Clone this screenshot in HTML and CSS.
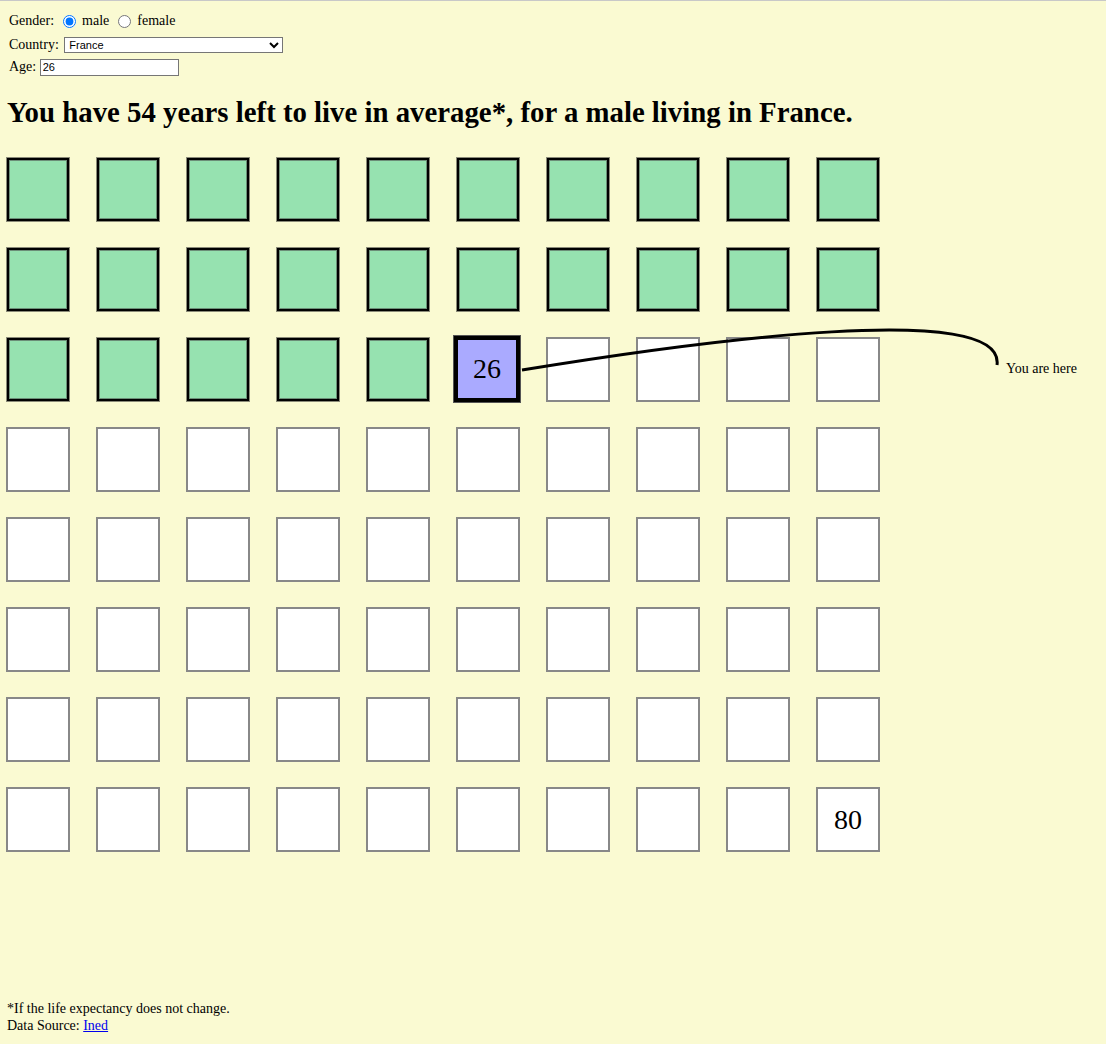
FILE: index.html
```html
<!DOCTYPE html>
<html>
<head>
<meta charset="utf-8">
<title>Life left</title>
<link rel="stylesheet" href="styles.css">
</head>
<body>
<form class="form">
  <div class="row row-gender">Gender: <input type="radio" name="g" class="radio" checked> male <input type="radio" name="g" class="radio"> female</div>
  <div class="row row-country">Country: <select class="select"><option>France</option></select></div>
  <div class="row row-age">Age: <input type="text" class="age" value="26"></div>
</form>
<h1 class="title">You have 54 years left to live in average*, for a male living in France.</h1>
<div class="board">
  <div class="grid" id="grid"></div>
  <svg class="curve" width="1100" height="260" viewBox="0 0 1100 260">
    <path d="M516,213 C700,183 1000,143 991,208" fill="none" stroke="#000" stroke-width="3"/>
  </svg>
  <span class="here">You are here</span>
</div>
<div class="foot">
  <div>*If the life expectancy does not change.</div>
  <div>Data Source: <a href="#">Ined</a></div>
</div>
<script>
  var g = document.getElementById('grid');
  for (var i = 1; i <= 80; i++) {
    var d = document.createElement('div');
    d.className = 'cell' + (i < 26 ? ' lived' : '') + (i === 26 ? ' now' : '');
    if (i === 26 || i === 80) d.textContent = i;
    g.appendChild(d);
  }
</script>
</body>
</html>
```
FILE: styles.css
```css
html {
  border-top: 1px solid #c8c8c8;
  background: #fafad2;
}
body {
  margin: 8px 8px 8px 5px;
  font-family: "Liberation Serif", "Times New Roman", serif;
  font-size: 14px;
  color: #000;
}
.form {
  margin: 0;
  padding-left: 4px;
}
.row {
  display: flex;
  align-items: center;
  height: 22px;
  white-space: pre;
}
.row-gender {
  margin-top: 1px;
}
.row-country {
  margin-top: 2px;
}
.radio {
  width: 13px;
  height: 13px;
  margin: 0 3px 0 5px;
}
.select {
  margin-left: 2px;
  width: 219px;
  height: 16px;
  font-family: "Liberation Sans", Arial, sans-serif;
  font-size: 11px;
  padding: 0;
  border: 1px solid #767676;
  background: #fff;
}
.age {
  width: 139px;
  height: 17px;
  box-sizing: border-box;
  font-family: "Liberation Sans", Arial, sans-serif;
  font-size: 11px;
  padding: 0 2px;
  border: 1px solid #767676;
}
.title {
  margin: 18px 0 0 2px;
  font-size: 28.8px;
  line-height: 32px;
  font-weight: bold;
}
.board {
  position: relative;
  margin: 29px 0 0 1px;
}
.grid {
  display: grid;
  grid-template-columns: repeat(10, 64px);
  grid-auto-rows: 65px;
  column-gap: 26px;
  row-gap: 25px;
}
.cell {
  box-sizing: border-box;
  border: 2px solid #888;
  background: #fff;
  display: flex;
  align-items: center;
  justify-content: center;
  font-size: 28px;
}
.cell.lived {
  background: #96e2b0;
  border: 1px solid #8a8a78;
  box-shadow: inset 0 0 0 2px #000, inset 0 0 0 3px #6c8e78;
}
.cell.now {
  background: #aaaaff;
  margin: -2px 0 0 -3px;
  width: 68px;
  height: 68px;
  border: 1px solid #555;
  box-shadow: inset 0 0 0 4px #000;
}
.curve {
  position: absolute;
  left: 0;
  top: 0;
  pointer-events: none;
}
.here {
  position: absolute;
  left: 1000px;
  top: 204px;
}
.foot {
  margin-top: 148px;
  padding-left: 2px;
  line-height: 17px;
}
.foot a {
  color: #00e;
}
```
